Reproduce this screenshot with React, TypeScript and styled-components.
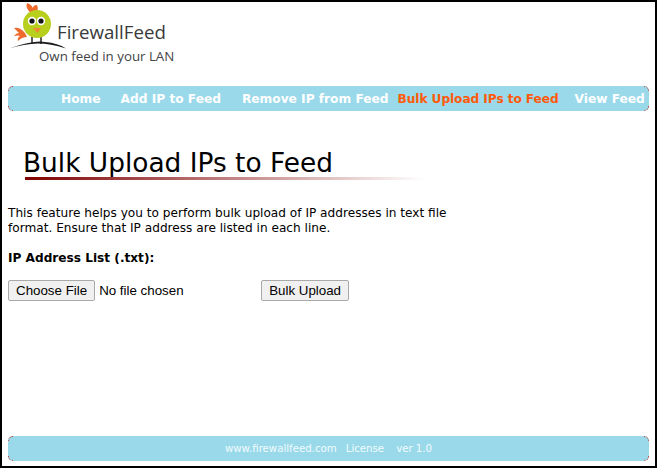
import React from "react";
import styled, { createGlobalStyle, css } from "styled-components";

const GlobalStyle = createGlobalStyle`
  html, body {
    margin: 0;
    padding: 0;
    background: #fff;
  }
`;

const Page = styled.div`
  box-sizing: border-box;
  width: 657px;
  height: 468px;
  border: 2px solid #000;
  padding: 0 6px 5px;
  display: flex;
  flex-direction: column;
  font-family: "DejaVu Sans", Verdana, sans-serif;
  font-size: 12.13px;
  color: #000;
  background: #fff;
`;

const Header = styled.div`
  height: 84px;
  display: flex;
  flex-direction: column;
`;

const LogoRow = styled.div`
  display: flex;
  align-items: flex-start;
  padding-top: 1px;
  height: 44px;
`;

const Brand = styled.span`
  font-family: "Open Sans", sans-serif;
  font-size: 18.7px;
  line-height: 25px;
  color: #3a3a3a;
  margin: 16px 0 0 -11px;
`;

const Tagline = styled.span`
  font-family: "Open Sans", sans-serif;
  font-size: 13.3px;
  color: #444;
  margin-left: 31px;
`;

const Bar = styled.div<{ $center?: boolean }>`
  position: relative;
  height: 25px;
  background: #99d9ea;
  border-radius: 5px;
  display: flex;
  align-items: center;
  flex: none;
  justify-content: ${(p) => (p.$center ? "center" : "flex-start")};
`;

const corners = {
  tl: css`top: 0; left: 0; border-top-width: 1px; border-left-width: 1px; border-top-left-radius: 5px;`,
  tr: css`top: 0; right: 0; border-top-width: 1px; border-right-width: 1px; border-top-right-radius: 5px;`,
  bl: css`bottom: 0; left: 0; border-bottom-width: 1px; border-left-width: 1px; border-bottom-left-radius: 5px;`,
  br: css`bottom: 0; right: 0; border-bottom-width: 1px; border-right-width: 1px; border-bottom-right-radius: 5px;`,
};

const Corner = styled.i<{ $at: keyof typeof corners }>`
  position: absolute;
  width: 4px;
  height: 4px;
  border: 0 dotted #c8403c;
  ${(p) => corners[p.$at]}
`;

const NavLink = styled.a<{ $active?: boolean; $left: number }>`
  font-size: 12.2px;
  font-weight: bold;
  white-space: nowrap;
  color: ${(p) => (p.$active ? "#ff5a0a" : "#fff")};
  letter-spacing: ${(p) => (p.$active ? "-0.09px" : "0")};
  margin-left: ${(p) => p.$left}px;
`;

const Content = styled.div`
  flex: 1;
  display: flex;
  flex-direction: column;
`;

const Title = styled.h1`
  margin: 37px 0 0 15px;
  font-size: 26.4px;
  line-height: 29px;
  font-weight: normal;
`;

const TitleRule = styled.div`
  margin: 0 0 0 17px;
  width: 400px;
  height: 3px;
  background: linear-gradient(to right, #800000, #fff);
`;

const Intro = styled.p`
  margin: 26px 0 0;
  width: 450px;
  line-height: 15px;
`;

const FieldLabel = styled.div`
  margin-top: 15px;
  font-weight: bold;
  line-height: 15px;
`;

const FormRow = styled.div`
  display: flex;
  align-items: center;
  margin-top: 14px;
`;

const FormButton = styled.button`
  box-sizing: border-box;
  height: 21px;
  padding: 0 7px;
  font-family: "Liberation Sans", Arial, sans-serif;
  font-size: 13.33px;
  color: #000;
  background: #f0f0f0;
  border: 1px solid #a9a9a9;
  border-radius: 2px;
`;

const FileStatus = styled.span`
  font-family: "Liberation Sans", Arial, sans-serif;
  font-size: 13.33px;
  margin-left: 4px;
  width: 162px;
`;

const FootLink = styled.span<{ $left?: number }>`
  color: #f2fbfd;
  font-size: 10.2px;
  margin-left: ${(p) => p.$left ?? 0}px;
`;

function ChickLogo() {
  return (
    <svg width="60" height="48" viewBox="0 0 60 48">
      <path d="M23 10 Q17 5 19 0 Q23 1 25 5 Q25 2 29 2 Q31 6 28 10Z" fill="#ee6a2c" />
      <path d="M17 30 Q12 24 6 25 Q9 28 11 30 Q8 30 6 33 Q10 32 12 33 Q9 35 10 38 Q14 34 19 34Z" fill="#ee6a2c" />
      <path d="M24 34 V41 M33 34 V41" stroke="#333" strokeWidth="1.6" />
      <circle cx="29" cy="21" r="14" fill="#b9cf1e" />
      <circle cx="24" cy="18" r="4.2" fill="#fff" />
      <circle cx="33" cy="18" r="4.2" fill="#fff" />
      <circle cx="24" cy="18" r="2.6" fill="#151515" />
      <circle cx="33" cy="18" r="2.6" fill="#151515" />
      <path d="M25 25 H33 L29.5 30Z" fill="#f08a34" />
      <path d="M1 45.5 Q26 37 37 39 Q50 40 58 45.5 Q42 40.5 30 40.5 Q16 41 1 45.5Z" fill="#1c1c1c" />
    </svg>
  );
}

export default function App() {
  return (
    <Page>
      <GlobalStyle />
      <Header>
        <LogoRow>
          <ChickLogo />
          <Brand>FirewallFeed</Brand>
        </LogoRow>
        <Tagline>Own feed in your LAN</Tagline>
      </Header>
      <Bar>
        <Corner $at="tl" />
        <Corner $at="bl" />
        <Corner $at="tr" />
        <Corner $at="br" />
        <NavLink $left={53}>Home</NavLink>
        <NavLink $left={20}>Add IP to Feed</NavLink>
        <NavLink $left={21}>Remove IP from Feed</NavLink>
        <NavLink $left={9} $active>Bulk Upload IPs to Feed</NavLink>
        <NavLink $left={16}>View Feed</NavLink>
      </Bar>
      <Content>
        <Title>Bulk Upload IPs to Feed</Title>
        <TitleRule />
        <Intro>
          This feature helps you to perform bulk upload of IP addresses in text file format. Ensure that IP address are listed in each line.
        </Intro>
        <FieldLabel>IP Address List (.txt):</FieldLabel>
        <FormRow>
          <FormButton type="button">Choose File</FormButton>
          <FileStatus>No file chosen</FileStatus>
          <FormButton type="button">Bulk Upload</FormButton>
        </FormRow>
      </Content>
      <Bar $center>
        <Corner $at="tl" />
        <Corner $at="bl" />
        <Corner $at="tr" />
        <Corner $at="br" />
        <FootLink>www.firewallfeed.com</FootLink>
        <FootLink $left={9}>License</FootLink>
        <FootLink $left={12}>ver 1.0</FootLink>
      </Bar>
    </Page>
  );
}
